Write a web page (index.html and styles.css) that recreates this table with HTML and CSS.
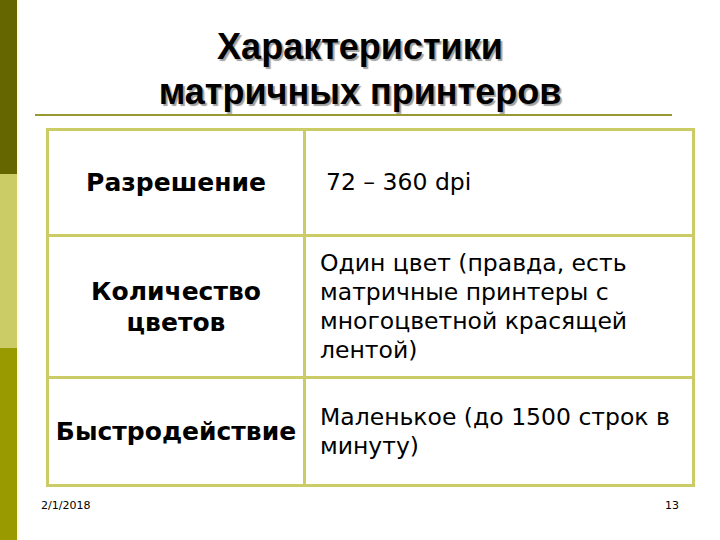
FILE: index.html
```html
<!DOCTYPE html>
<html lang="ru">
<head>
<meta charset="utf-8">
<title>Характеристики матричных принтеров</title>
<link rel="stylesheet" href="styles.css">
</head>
<body>
<div class="slide">
  <div class="sidebar">
    <div class="seg seg-dark"></div>
    <div class="seg seg-light"></div>
    <div class="seg seg-mid"></div>
  </div>
  <div class="main">
    <h1 class="title">Характеристики<br>матричных принтеров</h1>
    <div class="rule"></div>
    <table class="specs">
      <tr class="row-1">
        <th class="label">Разрешение</th>
        <td class="value value-indent">72 – 360 dpi</td>
      </tr>
      <tr class="row-2">
        <th class="label">Количество<br>цветов</th>
        <td class="value">Один цвет (правда, есть матричные принтеры с многоцветной красящей лентой)</td>
      </tr>
      <tr class="row-3">
        <th class="label">Быстродействие</th>
        <td class="value">Маленькое (до 1500 строк в минуту)</td>
      </tr>
    </table>
    <div class="footer">
      <span class="date">2/1/2018</span>
      <span class="page">13</span>
    </div>
  </div>
</div>
</body>
</html>
```
FILE: styles.css
```css
html, body {
  margin: 0;
  padding: 0;
  background: #ffffff;
}
.slide {
  display: flex;
  width: 720px;
  height: 540px;
  overflow: hidden;
  background: #ffffff;
}
.sidebar {
  width: 17px;
  display: flex;
  flex-direction: column;
  border-right: 2px solid #fffbe8;
}
.seg-dark { height: 174px; background: #666600; }
.seg-light { height: 174px; background: #cccc66; }
.seg-mid { flex: 1; background: #999900; }
.main {
  flex: 1;
  display: flex;
  flex-direction: column;
}
.title {
  margin: 24px 0 0 16px;
  width: 650px;
  text-align: center;
  font-family: "Liberation Sans", Arial, sans-serif;
  font-weight: bold;
  font-size: 36px;
  line-height: 45px;
  color: #000000;
  text-shadow: 2px 2px 1px #a0a0a0;
}
.rule {
  margin-left: 16px;
  width: 637px;
  height: 2px;
  background: #999933;
}
.specs {
  margin: 12px 0 0 27px;
  width: 649px;
  border-collapse: collapse;
  border: 3px solid #cccc66;
  font-family: "DejaVu Sans", Verdana, sans-serif;
  color: #000000;
}
.specs th, .specs td {
  border: 3px solid #cccc66;
  padding: 0;
}
.row-1 { height: 106px; }
.row-2 { height: 142px; }
.row-3 { height: 108px; }
.label {
  width: 254px;
  text-align: center;
  font-weight: bold;
  font-size: 25px;
  line-height: 31px;
}
.value {
  text-align: left;
  padding-left: 14px !important;
  padding-right: 8px !important;
  font-size: 23.5px;
  line-height: 29px;
  font-weight: normal;
}
.value-indent {
  padding-left: 20px !important;
}
.footer {
  display: flex;
  justify-content: space-between;
  margin: 12px 0 0 22px;
  width: 638px;
  font-family: "DejaVu Sans", Verdana, sans-serif;
  font-size: 11px;
  color: #000000;
}
```
